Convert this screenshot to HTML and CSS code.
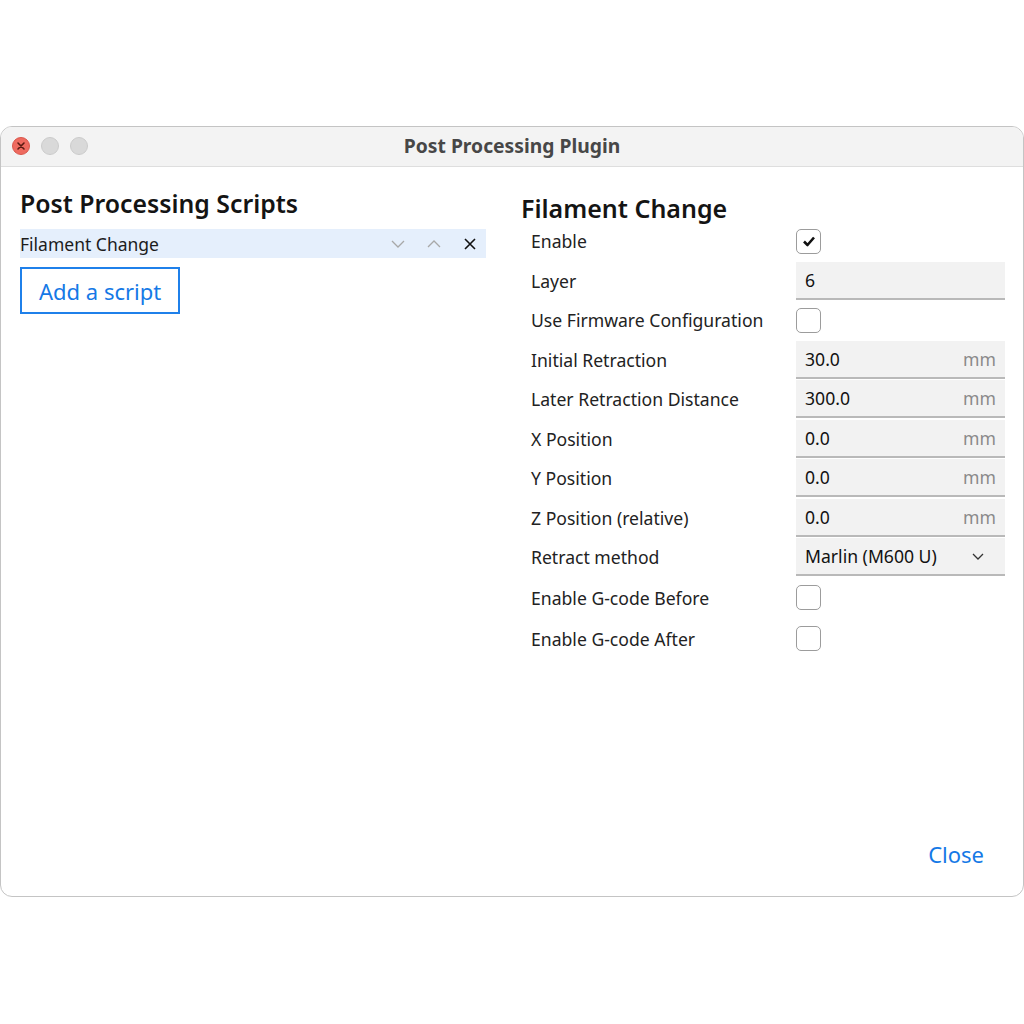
FILE: index.html
```html
<!DOCTYPE html>
<html lang="en">
<head>
    <meta charset="UTF-8">
    <meta name="viewport" content="width=device-width, initial-scale=1.0">
    <title>Post Processing Plugin</title>
    <link rel="stylesheet" href="styles.css">
</head>
<body>

<div class="window">
    <div class="titlebar">
        <div class="lights">
            <span class="light close-light">
                <svg width="10" height="10" viewBox="0 0 10 10"><path d="M2 2 L8 8 M8 2 L2 8" stroke="#5a1a12" stroke-width="1.6" stroke-linecap="round"/></svg>
            </span>
            <span class="light"></span>
            <span class="light"></span>
        </div>
        <div class="title">Post Processing Plugin</div>
    </div>

    <div class="content">
        <div class="left">
            <h2>Post Processing Scripts</h2>
            <div class="script-row">
                <span class="script-name">Filament Change</span>
                <span class="row-icons">
                    <svg class="ico dim" width="16" height="16" viewBox="0 0 16 16"><path d="M2 5 L8 11 L14 5" fill="none" stroke="#a8a8a8" stroke-width="1.3"/></svg>
                    <svg class="ico dim" width="16" height="16" viewBox="0 0 16 16"><path d="M2 11 L8 5 L14 11" fill="none" stroke="#a8a8a8" stroke-width="1.3"/></svg>
                    <svg class="ico" width="16" height="16" viewBox="0 0 16 16"><path d="M3 3 L13 13 M13 3 L3 13" stroke="#111" stroke-width="1.6"/></svg>
                </span>
            </div>
            <button class="add-btn">Add a script</button>
        </div>

        <div class="right">
            <h2>Filament Change</h2>
            <div class="settings">
                <div class="row">
                    <label>Enable</label>
                    <span class="check on">
                        <svg width="14" height="12" viewBox="0 0 14 12"><path d="M2 6.5 L5.5 10 L12 2.5" fill="none" stroke="#111" stroke-width="2.6" stroke-linejoin="round"/></svg>
                    </span>
                </div>
                <div class="row">
                    <label>Layer</label>
                    <div class="field"><span>6</span></div>
                </div>
                <div class="row">
                    <label>Use Firmware Configuration</label>
                    <span class="check"></span>
                </div>
                <div class="row">
                    <label>Initial Retraction</label>
                    <div class="field"><span>30.0</span><span class="unit">mm</span></div>
                </div>
                <div class="row">
                    <label>Later Retraction Distance</label>
                    <div class="field"><span>300.0</span><span class="unit">mm</span></div>
                </div>
                <div class="row">
                    <label>X Position</label>
                    <div class="field"><span>0.0</span><span class="unit">mm</span></div>
                </div>
                <div class="row">
                    <label>Y Position</label>
                    <div class="field"><span>0.0</span><span class="unit">mm</span></div>
                </div>
                <div class="row">
                    <label>Z Position (relative)</label>
                    <div class="field"><span>0.0</span><span class="unit">mm</span></div>
                </div>
                <div class="row">
                    <label>Retract method</label>
                    <div class="field select">
                        <span>Marlin (M600 U)</span>
                        <svg width="14" height="14" viewBox="0 0 14 14"><path d="M2 5 L7 10 L12 5" fill="none" stroke="#333" stroke-width="1.3"/></svg>
                    </div>
                </div>
                <div class="row tall">
                    <label>Enable G-code Before</label>
                    <span class="check"></span>
                </div>
                <div class="row tall">
                    <label>Enable G-code After</label>
                    <span class="check"></span>
                </div>
            </div>
        </div>
    </div>

    <div class="footer">
        <a class="close-link">Close</a>
    </div>
</div>

</body>
</html>
```

FILE: styles.css
```css
body {
    margin: 0;
    background: #fff;
    font-family: "Noto Sans", "Open Sans", sans-serif;
    color: #1c1c1c;
}
.window {
    margin-top: 126px;
    height: 771px;
    box-sizing: border-box;
    border: 1px solid #c4c4c4;
    border-radius: 12px;
    background: #fff;
    overflow: hidden;
    display: flex;
    flex-direction: column;
}
.titlebar {
    height: 40px;
    flex: none;
    background: #f3f3f3;
    border-bottom: 1px solid #dedede;
    box-sizing: border-box;
    position: relative;
    display: flex;
    align-items: center;
    justify-content: center;
}
.lights {
    position: absolute;
    left: 11px;
    top: 10px;
    display: flex;
    gap: 11px;
}
.light {
    width: 18px;
    height: 18px;
    border-radius: 50%;
    background: #d9d9d9;
    box-sizing: border-box;
    border: 1px solid #cbcbcb;
    display: flex;
    align-items: center;
    justify-content: center;
}
.close-light {
    background: #ee6a5f;
    border-color: #d9574c;
}
.title {
    font-size: 19.3px;
    font-weight: 700;
    color: #474747;
    margin-top: -3px;
}
.content {
    flex: 1;
    display: flex;
    padding: 0 18px 0 19px;
}
h2 {
    margin: 0;
    font-weight: 600;
    font-size: 24px;
    color: #141414;
}
.left {
    flex: none;
    width: 466px;
    padding-top: 20px;
}
.left h2 {
    font-size: 24.8px;
    line-height: 32px;
}
.script-row {
    margin-top: 10px;
    height: 29px;
    background: #e5effc;
    display: flex;
    align-items: center;
    justify-content: space-between;
    font-size: 17.5px;
}
.row-icons {
    display: flex;
    gap: 20px;
    padding-right: 8px;
}
.ico {
    display: block;
}
.add-btn {
    margin-top: 9px;
    height: 47px;
    padding: 0 17px;
    font-family: inherit;
    font-size: 22px;
    color: #1579e6;
    background: #fff;
    border: 2px solid #1f80ea;
    border-radius: 0;
}
.right {
    margin-left: 35px;
    flex: 1;
    padding-top: 26px;
}
.right h2 {
    font-size: 25px;
    line-height: 30px;
}
.settings {
    margin-top: -1.5px;
}
.row {
    height: 39.5px;
    display: flex;
    align-items: center;
    padding-left: 10px;
}
.row.tall {
    height: 41px;
}
.row label {
    flex: none;
    width: 265px;
    font-size: 17.6px;
    color: #222;
}
.check {
    flex: none;
    width: 25px;
    height: 25px;
    box-sizing: border-box;
    border: 1.5px solid #9c9c9c;
    border-radius: 5px;
    background: #fff;
    display: flex;
    align-items: center;
    justify-content: center;
}
.field {
    flex: none;
    width: 209px;
    height: 38px;
    box-sizing: border-box;
    background: #f2f2f2;
    border-bottom: 2px solid #b9b9b9;
    display: flex;
    align-items: center;
    justify-content: space-between;
    padding: 0 9px 0 9px;
    font-size: 17.6px;
    color: #111;
}
.unit {
    color: #8a8a8a;
}
.select {
    padding-right: 20px;
}
.footer {
    height: 57px;
    flex: none;
    display: flex;
    justify-content: flex-end;
    align-items: flex-start;
    padding-right: 39px;
}
.close-link {
    font-size: 22px;
    color: #1579e6;
}
```
